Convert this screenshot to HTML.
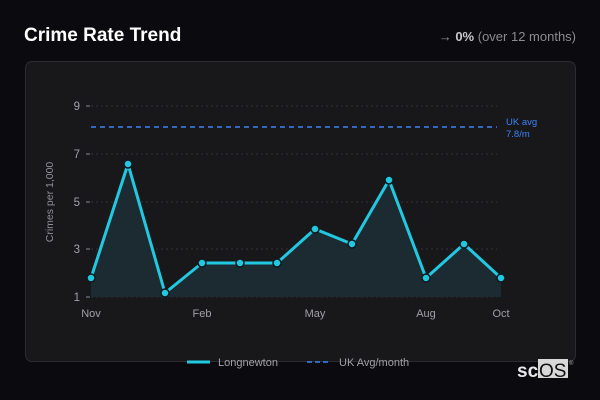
<!DOCTYPE html>
<html><head><meta charset="utf-8"><style>
html,body{margin:0;width:600px;height:400px;background:#0b0b0f;overflow:hidden;font-family:"Liberation Sans",sans-serif}
.t{position:absolute;left:24px;top:25px;color:#fff;font-size:19px;font-weight:bold}
.r{position:absolute;right:24px;top:29px;color:#8a8a90;font-size:13px}
.r b{color:#c8c8cc}
.card{position:absolute;left:25px;top:61px;width:549px;height:299px;background:#18181b;border:1px solid #2b2b30;border-radius:7px}
</style></head><body>
<div class="t">Crime Rate Trend</div>
<div class="r">→ <b>0%</b> (over 12 months)</div>
<div class="card"></div>
<svg width="600" height="400" style="position:absolute;left:0;top:0" font-family="Liberation Sans, sans-serif">
<g stroke="#333338" stroke-dasharray="2,3" stroke-width="1">
<line x1="91" y1="106" x2="497" y2="106"/><line x1="91" y1="154" x2="497" y2="154"/><line x1="91" y1="202" x2="497" y2="202"/><line x1="91" y1="249" x2="497" y2="249"/><line x1="91" y1="297" x2="497" y2="297"/></g>
<g stroke="#888" stroke-width="1"><line x1="86" y1="106" x2="90" y2="106"/><line x1="86" y1="154" x2="90" y2="154"/><line x1="86" y1="202" x2="90" y2="202"/><line x1="86" y1="249" x2="90" y2="249"/><line x1="86" y1="297" x2="90" y2="297"/></g>
<g fill="#a0a0a6" font-size="11.5" text-anchor="end"><text x="80" y="110">9</text><text x="80" y="158">7</text><text x="80" y="206">5</text><text x="80" y="253">3</text><text x="80" y="301">1</text></g>
<text transform="translate(53,202) rotate(-90)" fill="#909096" font-size="10.5" text-anchor="middle">Crimes per 1,000</text>
<line x1="91" y1="127" x2="497" y2="127" stroke="#3b82f6" stroke-width="1.6" stroke-dasharray="5,4"/>
<text x="506" y="125" fill="#3b82f6" font-size="9.5">UK avg</text><text x="506" y="137" fill="#3b82f6" font-size="9.5">7.8/m</text>
<path d="M91,278 L128,164 L165,293 L202,263 L240,263 L277,263 L315,229 L352,244 L389,180 L426,278 L464,244 L501,278 L501,297 L91,297Z" fill="#1b2b31"/>
<path d="M91,278 L128,164 L165,293 L202,263 L240,263 L277,263 L315,229 L352,244 L389,180 L426,278 L464,244 L501,278" fill="none" stroke="#22c8e0" stroke-width="3" stroke-linejoin="round"/>
<g fill="#22c8e0" stroke="#0b1a1f" stroke-width="1.5"><circle cx="91" cy="278" r="4"/><circle cx="128" cy="164" r="4"/><circle cx="165" cy="293" r="4"/><circle cx="202" cy="263" r="4"/><circle cx="240" cy="263" r="4"/><circle cx="277" cy="263" r="4"/><circle cx="315" cy="229" r="4"/><circle cx="352" cy="244" r="4"/><circle cx="389" cy="180" r="4"/><circle cx="426" cy="278" r="4"/><circle cx="464" cy="244" r="4"/><circle cx="501" cy="278" r="4"/></g>
<g fill="#a0a0a6" font-size="11" text-anchor="middle"><text x="91" y="317">Nov</text><text x="202" y="317">Feb</text><text x="315" y="317">May</text><text x="426" y="317">Aug</text><text x="501" y="317">Oct</text></g>
<line x1="187" y1="362" x2="210" y2="362" stroke="#22c8e0" stroke-width="3"/>
<text x="218" y="366" fill="#a0a0a6" font-size="11">Longnewton</text>
<line x1="307" y1="362" x2="330" y2="362" stroke="#3b82f6" stroke-width="1.6" stroke-dasharray="5,3"/>
<text x="339" y="366" fill="#a0a0a6" font-size="11">UK Avg/month</text>
<rect x="538" y="359" width="30" height="19" fill="#d8d8d8"/>
<text x="517" y="377" fill="#e8e8e8" font-size="19" font-weight="bold" font-family="Liberation Sans, sans-serif">sc</text>
<text x="539" y="377" fill="#111" font-size="19" font-family="Liberation Sans, sans-serif">OS</text>
<text x="569" y="365" fill="#aaa" font-size="6">®</text>
</svg>
</body></html>
